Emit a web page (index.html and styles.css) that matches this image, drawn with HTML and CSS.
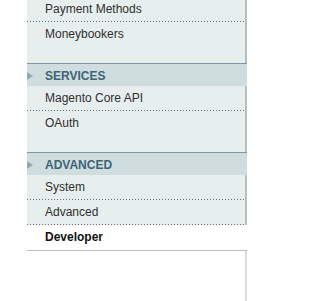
FILE: index.html
```html
<!DOCTYPE html>
<html lang="en">
<head>
    <meta charset="UTF-8">
    <title>Configuration</title>
    <link rel="stylesheet" href="styles.css">
</head>
<body>
    <div class="side-col">
        <ul class="tab-group first-group">
            <li class="tab-item"><a href="#">Payment Methods</a></li>
            <li class="tab-item last"><a href="#">Moneybookers</a></li>
        </ul>
        <div class="tab-title"><span class="arrow"></span>Services</div>
        <ul class="tab-group">
            <li class="tab-item"><a href="#">Magento Core API</a></li>
            <li class="tab-item last"><a href="#">OAuth</a></li>
        </ul>
        <div class="tab-title"><span class="arrow"></span>Advanced</div>
        <ul class="tab-group end-group">
            <li class="tab-item"><a href="#">System</a></li>
            <li class="tab-item"><a href="#">Advanced</a></li>
            <li class="tab-item active"><a href="#">Developer</a></li>
        </ul>
        <div class="side-rest"></div>
    </div>
</body>
</html>
```

FILE: styles.css
```css
*{
    margin: 0;
    padding: 0;
    box-sizing: border-box;
}
body{
    background: #fff;
    font-family: "Liberation Sans", Arial, sans-serif;
    font-size: 12px;
    color: #2f2f2f;
}
.side-col{
    width: 220px;
    margin-left: 27px;
}
.tab-group{
    list-style: none;
    background: #e7eeee;
    border-right: 2px solid #adc3c0;
    padding-bottom: 17px;
}
.first-group{
    margin-top: -3px;
}
.end-group{
    padding-bottom: 0;
}
.tab-item{
    height: 25px;
    background: linear-gradient(to right, #6d6d6d 1px, transparent 1px) repeat-x left bottom / 3px 1px;
}
.tab-item.last{
    height: 24px;
    background: none;
}
.tab-item a{
    display: block;
    line-height: 24px;
    padding-left: 18px;
    color: #2f2f2f;
    text-decoration: none;
}
.tab-item.active{
    background: #fff;
    height: 26px;
    margin-right: -2px;
    border-bottom: 1px solid #bdbdbd;
}
.tab-item.active a{
    font-weight: bold;
    color: #111;
}
.tab-title{
    display: flex;
    align-items: center;
    height: 23px;
    border-top: 1px solid #7f979f;
    background: #d0dddf;
    color: #3e6478;
    font-weight: bold;
    text-transform: uppercase;
    padding-top: 1px;
}
.arrow{
    width: 0;
    height: 0;
    border-top: 4px solid transparent;
    border-bottom: 4px solid transparent;
    border-left: 6px solid #8eaab3;
    margin-right: 12px;
}
.side-rest{
    height: 60px;
    border-right: 2px solid #dcdcdc;
}
```
